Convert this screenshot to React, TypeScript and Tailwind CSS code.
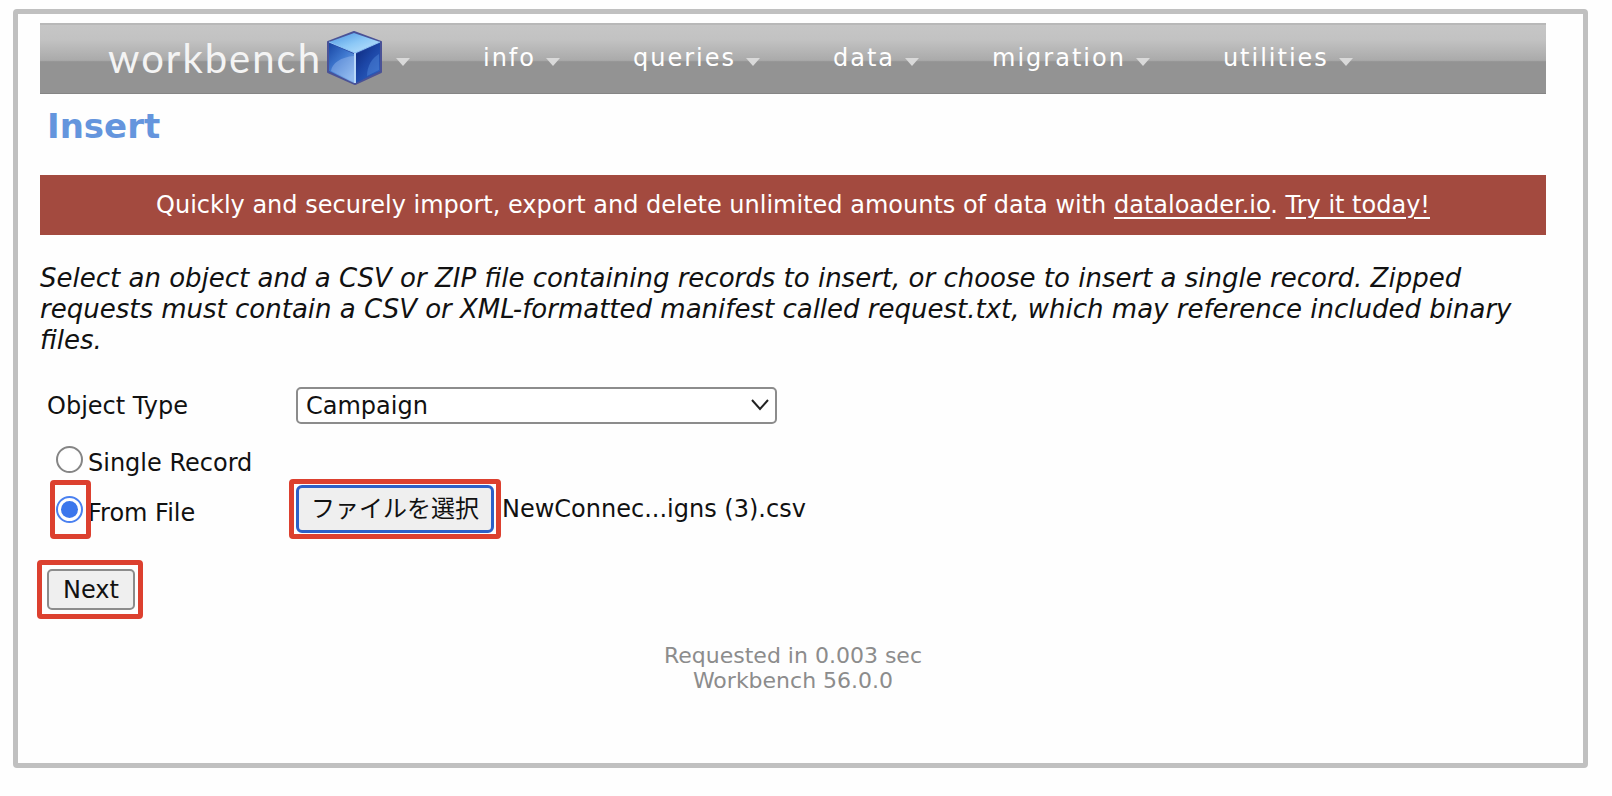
import { useRef, useState } from "react";

const menus = ["info", "queries", "data", "migration", "utilities"];

function Caret() {
  return (
    <svg width="14" height="8" viewBox="0 0 14 8" aria-hidden="true" className="mt-2">
      <path d="M0 0H14L7 8Z" fill="#d9d9d9" />
    </svg>
  );
}

function Cube() {
  return (
    <svg width="57" height="56" viewBox="0 0 57 56" aria-hidden="true">
      <defs>
        <linearGradient id="top" x1="0" y1="0" x2="1" y2="1">
          <stop offset="0" stopColor="#4a93e0" />
          <stop offset="0.5" stopColor="#8cc8f6" />
          <stop offset="1" stopColor="#c4e6fd" />
        </linearGradient>
        <linearGradient id="left" x1="0" y1="0" x2="0.7" y2="1">
          <stop offset="0" stopColor="#1846a4" />
          <stop offset="0.5" stopColor="#3f78cf" />
          <stop offset="1" stopColor="#7fb0ec" />
        </linearGradient>
        <linearGradient id="right" x1="0" y1="0" x2="0.8" y2="1">
          <stop offset="0" stopColor="#0c2678" />
          <stop offset="0.5" stopColor="#1c46a6" />
          <stop offset="1" stopColor="#2f62c2" />
        </linearGradient>
      </defs>
      <path d="M28 2L55 12V42L29 54L2 42V12Z" fill="#2b4aa5" stroke="#4a5296" strokeWidth="2" strokeLinejoin="round" />
      <path d="M28 3L54 12L29 23L3 12Z" fill="url(#top)" />
      <path d="M3 13L28 24V53L3 41Z" fill="url(#left)" />
      <path d="M30 24L54 13V41L30 53Z" fill="url(#right)" />
      <path d="M5 41C6 33 15 27 28 26V52Z" fill="#b4cff5" opacity="0.35" />
      <path d="M41 46C41 36 46 28 53 24V40Z" fill="#5a94e4" opacity="0.4" />
      <path d="M3 12L29 23L54 12" fill="none" stroke="#8fc6f6" strokeWidth="1" />
      <path d="M29 23V53" stroke="#b9d8f8" strokeWidth="2" />
    </svg>
  );
}

function Highlight({ className }: { className: string }) {
  return (
    <span
      aria-hidden="true"
      className={`pointer-events-none absolute rounded-sm border-[5px] border-[#dc402f] ${className}`}
    />
  );
}

const radioClass =
  "size-[27px] shrink-0 appearance-none rounded-full border-2 border-[#858585] bg-white bg-clip-content p-[3px] checked:border-[#4a80f0] checked:bg-[#3b76ec]";

export default function App() {
  const [source, setSource] = useState("file");
  const fileInput = useRef<HTMLInputElement>(null);
  const [fileName, setFileName] = useState("NewConnec...igns (3).csv");

  return (
    <div className="min-h-screen bg-[#fefefe] pt-[9px] pr-6 pb-7 pl-[13px] font-['Verdana','DejaVu_Sans','Noto_Sans_CJK_JP',sans-serif] text-2xl text-[#111]">
      <div className="min-h-[759px] rounded-sm border-[5px] border-[#c0c0c0] pt-[9px] pr-[37px] pl-[22px]">
        <nav className="flex h-[71px] items-start gap-[73px] border-t-2 border-b border-t-[#b8b8b8] border-b-[#858585] bg-[linear-gradient(to_bottom,#c6c6c6_0%,#c2c2c2_22%,#aaaaaa_52%,#939393_54%,#939393_100%)] pl-[68px] text-white">
          <a href="#home" className="flex h-[66px] items-center gap-[13px]">
            <span className="flex items-center gap-1">
              <span className="font-['Lato',sans-serif] text-[40px] leading-[48px] tracking-wider text-[#f4f4f4]">workbench</span>
              <Cube />
            </span>
            <Caret />
          </a>
          {menus.map((m) => (
            <a key={m} href={`#${m}`} className="flex h-[66px] items-center gap-[10px] tracking-[2px]">
              {m}
              <Caret />
            </a>
          ))}
        </nav>

        <h1 className="mt-3 pl-[7px] text-[34px] leading-[40px] font-bold text-[#6495dd]">Insert</h1>

        <p className="mt-[29px] bg-[#a34a3f] text-center leading-[60px] text-white">
          Quickly and securely import, export and delete unlimited amounts of data with{" "}
          <a href="#dataloader" className="underline decoration-2 underline-offset-4">dataloader.io</a>.{" "}
          <a href="#try" className="underline decoration-2 underline-offset-4">Try it today!</a>
        </p>

        <p className="mt-[28px] text-[26px] leading-[31px] italic">
          Select an object and a CSV or ZIP file containing records to insert, or choose to insert a single record. Zipped
          requests must contain a CSV or XML-formatted manifest called request.txt, which may reference included binary
          files.
        </p>

        <form onSubmit={(e) => e.preventDefault()}>
          <div className="mt-[31px] grid grid-cols-[249px_1fr] items-center pl-[7px]">
            <label htmlFor="object-type">Object Type</label>
            <div className="relative w-[481px]">
              <select
                id="object-type"
                className="h-[37px] w-full appearance-none rounded-[5px] border-2 border-[#8c8c8c] bg-white pl-2 leading-8"
              >
                <option>Campaign</option>
              </select>
              <svg width="18" height="12" viewBox="0 0 18 12" aria-hidden="true" className="pointer-events-none absolute top-3 right-2">
                <path d="M1 1L9 10L17 1" fill="none" stroke="#222" strokeWidth="2" />
              </svg>
            </div>
          </div>

          <div className="mt-[15px] flex items-center gap-[5px] pl-4">
            <input id="single" type="radio" name="source" checked={source === "single"} onChange={() => setSource("single")} className={radioClass} />
            <label htmlFor="single" className="pt-2">Single Record</label>
          </div>

          <div className="mt-1.5 grid grid-cols-[240px_1fr] items-center pl-4">
            <div className="flex items-center gap-[5px]">
              <span className="relative flex">
                <input id="from-file" type="radio" name="source" checked={source === "file"} onChange={() => setSource("file")} className={radioClass} />
                <Highlight className="-right-2 -left-1.5 -inset-y-4" />
              </span>
              <label htmlFor="from-file" className="pt-2">From File</label>
            </div>
            <div className="flex items-center gap-2">
              <span className="relative flex">
                <button
                  type="button"
                  onClick={() => fileInput.current?.click()}
                  className="h-12 rounded-md border-[3px] border-[#2c60c8] bg-[#efefef] px-3"
                >
                  ファイルを選択
                </button>
                <Highlight className="-inset-x-[7px] -inset-y-[6px]" />
              </span>
              <input
                ref={fileInput}
                type="file"
                aria-label="File"
                className="hidden"
                onChange={(e) => setFileName(e.target.files?.[0]?.name ?? "")}
              />
              <span>{fileName}</span>
            </div>
          </div>

          <div className="mt-9 flex pl-[7px]">
            <span className="relative flex">
              <button type="submit" className="h-[41px] rounded-[5px] border-2 border-[#8c8c8c] bg-[#efefef] px-3.5">
                Next
              </button>
              <Highlight className="-right-2 -left-2.5 -inset-y-[9px]" />
            </span>
          </div>
        </form>

        <footer className="mt-[33px] text-center text-[22px] leading-[25px] text-[#8c8c8c]">
          <p>Requested in 0.003 sec</p>
          <p>Workbench 56.0.0</p>
        </footer>
      </div>
    </div>
  );
}
